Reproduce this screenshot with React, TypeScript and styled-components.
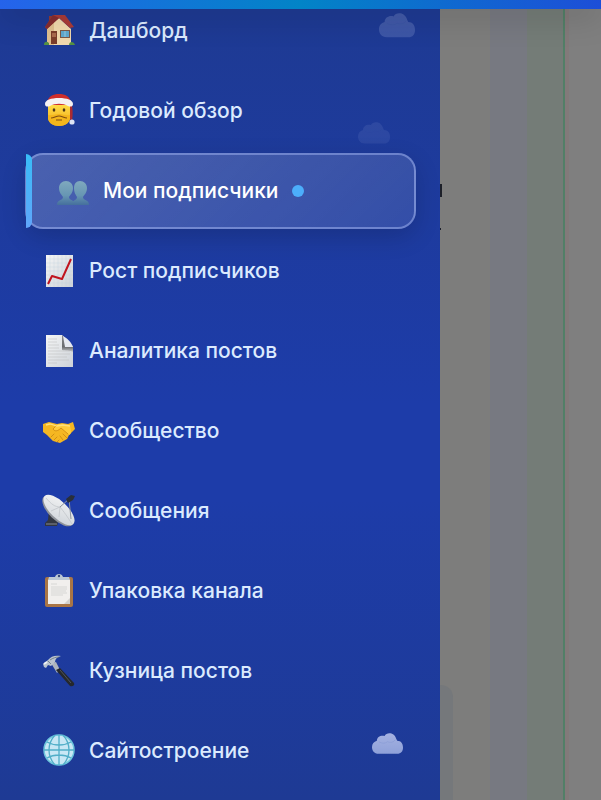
import React, { type ReactNode } from 'react';
import styled, { createGlobalStyle, css } from 'styled-components';

const GlobalStyle = createGlobalStyle`
  * { box-sizing: border-box; }
  html, body { margin: 0; height: 100%; }
  #root { height: 100%; }
  body { font-family: Inter, "Noto Sans", sans-serif; overflow: hidden; background: #7d7d7d; }
`;

const Page = styled.div`
  display: flex;
  flex-direction: column;
  height: 100vh;
`;

const TopBar = styled.header`
  position: relative;
  z-index: 2;
  flex: 0 0 9px;
  background: linear-gradient(90deg, #2563eb 0%, #0284c7 50%, #1d4ed8 100%);
  box-shadow: 0 4px 32px rgba(0, 0, 0, 0.3);
`;

const Body = styled.div`
  display: flex;
  flex: 1;
  min-height: 0;
`;

const Sidebar = styled.aside`
  position: relative;
  flex: 0 0 440px;
  overflow: hidden;
  background: linear-gradient(180deg, #1e3a93 0%, #1d3ca9 50%, #1d3ca9 62%, #1e3a94 100%);
`;

const Menu = styled.ul`
  display: flex;
  flex-direction: column;
  gap: 4px;
  margin: -16px 24px 0 25px;
  padding: 0;
  list-style: none;
`;

const MenuLink = styled.a<{ $active?: boolean }>`
  position: relative;
  display: flex;
  align-items: center;
  gap: 14px;
  height: 76px;
  padding: 0 18px;
  border-radius: 18px;
  color: #dbeafe;
  font-size: 21px;
  font-weight: 500;
  line-height: 32px;
  text-decoration: none;
  white-space: nowrap;
  ${({ $active }) =>
    $active &&
    css`
      padding: 0 30px;
      color: #ffffff;
      border: 2px solid rgba(160, 178, 240, 0.52);
      background: linear-gradient(135deg, rgba(255, 255, 255, 0.2), rgba(255, 255, 255, 0.1));
      box-shadow: 0 8px 24px rgba(0, 0, 0, 0.16);
      &::before {
        content: '';
        position: absolute;
        left: -1px;
        top: -1px;
        bottom: -1px;
        width: 6px;
        border-radius: 0 6px 6px 0;
        background: linear-gradient(180deg, #38bdf8, #60a5fa);
      }
    `}
`;

const IconBox = styled.svg`
  flex: none;
  width: 32px;
  height: 32px;
  overflow: visible;
`;

const Dot = styled.span`
  width: 12px;
  height: 12px;
  border-radius: 50%;
  background: #4caefb;
`;

const CloudSvg = styled.svg<{ $x: number; $y: number; $w: number; $o: number }>`
  position: absolute;
  left: ${({ $x }) => $x}px;
  top: ${({ $y }) => $y}px;
  width: ${({ $w }) => $w}px;
  opacity: ${({ $o }) => $o};
  pointer-events: none;
`;

const Backdrop = styled.main`
  position: relative;
  display: flex;
  flex: 1;
  min-width: 0;
  overflow: hidden;
`;

const Stripe = styled.div<{ $width?: number; $color: string }>`
  flex: ${({ $width }) => ($width ? `0 0 ${$width}px` : '1')};
  background: ${({ $color }) => $color};
`;

const Peek = styled.span<{ $top: number; $w: number; $h: number }>`
  position: absolute;
  left: 0;
  top: ${({ $top }) => $top}px;
  width: ${({ $w }) => $w}px;
  height: ${({ $h }) => $h}px;
  background: #1d2029;
`;

const CardEdge = styled.div`
  position: absolute;
  left: 0;
  top: 676px;
  bottom: 0;
  width: 13px;
  border-top-right-radius: 12px;
  background: #75787b;
`;

const House = () => (
  <>
    <path d="M4 12 16 3l12 11v16H4z" fill="#f1d9ae" />
    <path d="M4 13 11 5v25H4z" fill="#e0bf90" />
    <path d="M6 1h4v8H6z" fill="#8e3a35" />
    <path d="M10 0h12l9 12-4 1L16 3 4 14 2 12z" fill="#a93b38" />
    <path d="M10 0 2 12l2 2L16 3z" fill="#842d30" />
    <rect x="8" y="16" width="6" height="13" fill="#7b3d2b" />
    <rect x="9" y="18" width="4" height="4" fill="#a9694d" />
    <rect x="17" y="15" width="10" height="8" fill="#7d5a46" />
    <rect x="18" y="16" width="8" height="6" fill="#5fa9cf" />
    <path d="M22 16v6" stroke="#9fd4ea" strokeWidth=".8" />
    <path d="M1 30c0-4 3-4 5-2v2zM26 30c0-4 5-4 6 0z" fill="#559143" />
  </>
);

const Santa = () => (
  <>
    <path d="M5 8h22v14c0 5-4 9-11 9S5 27 5 22z" fill="url(#gold)" />
    <path d="M5 20c4 1 7-1 11-1s7 2 11 1v4c-1 4-5 7-11 7S6 28 5 24z" fill="#f3b51c" />
    <path d="M4 7C6 1 10-1 16-1s11 2 12 9v2H5z" fill="#cf2e2a" />
    <path d="M28 7c2 6 2 12 1 19l-2-2V9z" fill="#aa2b31" />
    <path d="M2 9c0-4 6-6 14-6s14 2 14 6c0 3-3 3-5 2-5-3-13-3-18 0-2 1-5 1-5-2z" fill="#f4f1f2" />
    <ellipse cx="11" cy="15" rx="1.300" ry="1.700" fill="#4d3417" />
    <ellipse cx="21" cy="15" rx="1.300" ry="1.700" fill="#4d3417" />
    <path d="M8 23c3 0 5-2 8-2s5 2 8 2M13 25h6" stroke="#7e4b10" strokeWidth="1.100" fill="none" />
    <circle cx="29" cy="27" r="2.600" fill="#dce3f5" />
  </>
);

const People = () => (
  <g fill="url(#people)">
    <path d="M9 6c-4 0-7 3-7 7 0 5 3 7 4 9 0 4-6 2-6 8h18c0-6-6-4-6-8 1-2 4-4 4-9 0-4-3-7-7-7z" />
    <path d="M23 6c-4 0-6 3-6 7 0 5 2 7 3 9 0 4-5 2-5 8h17c0-6-6-4-6-8 1-2 4-4 4-9 0-4-3-7-7-7z" />
  </g>
);

const Growth = () => (
  <>
    <rect x="3" y="0" width="27" height="32" fill="url(#paper)" />
    <path d="M7 0v32M11 0v32M15 0v32M19 0v32M23 0v32M27 0v32M3 4h27M3 8h27M3 12h27M3 16h27M3 20h27M3 24h27M3 28h27" stroke="#b8cbd8" strokeWidth=".3" />
    <path d="m5 29 4-8 10 3 9-20" stroke="#c0141e" strokeWidth="2" fill="none" strokeLinejoin="round" />
  </>
);

const Document = () => (
  <>
    <path d="M3 0h16l11 12v20H3z" fill="url(#paper)" />
    <path d="M5 4h9M5 7h9M5 10h11M5 13h11M5 16h22M5 19h22M5 22h19M5 25h21M5 28h9" stroke="#b8b8b8" strokeWidth=".5" />
    <path d="M19 0v15c3 1 8 0 11 2v-5z" fill="url(#fold)" />
    <path d="M20 1c4 2 9 7 10 11h-8z" fill="#e6e9f0" />
  </>
);

const Handshake = () => (
  <>
    <path d="M0 9 6 7l8 2 5-1 6 1 5-2 2 7-6 6-2 4-7 4-7-2-6-6-4-3z" fill="#f5b722" />
    <path d="m14 9-4 5c2 3 5 2 8-1l8 7c3-1 2-5 1-9l-7-2z" fill="#ffcb3b" />
    <path d="m14 10-4 4c2 3 5 2 8-1l7 6M20 19l4 4M17 21l3 4M8 22l3-3M11 25l3-3M14 27l2-2" fill="none" stroke="#c98511" strokeWidth=".8" strokeLinecap="round" />
    <path d="m3 10 4-1 7 2 6-1 7 1" stroke="#ffe079" fill="none" strokeWidth="1.300" />
  </>
);

const Satellite = () => (
  <>
    <path d="m6 15-1 10-3 3v3h12l1-3-3-6z" fill="#323640" />
    <path d="M3 29h11" stroke="#5b5f69" strokeWidth="2" />
    <ellipse cx="15" cy="16" rx="20" ry="9" fill="#8f939a" transform="rotate(44 15 16)" />
    <ellipse cx="16" cy="15" rx="20" ry="8.500" fill="url(#paper)" transform="rotate(44 16 15)" />
    <path d="M3 3c5 6 9 9 14 9 4 5 7 9 12 17M17 12l-9 4M17 12l-1 10" fill="none" stroke="#bdc1c6" strokeWidth=".7" />
    <path d="m17 12 9-8 2 20" fill="none" stroke="#8d949d" strokeWidth="1" />
    <path d="m23 4 5-4 4 1-2 4-5 3z" fill="#292f3a" />
  </>
);

const Clipboard = () => (
  <>
    <rect x="2" y="2" width="28" height="30" rx="2" fill="#a97545" />
    <rect x="5" y="5" width="22" height="24" fill="#f1efed" />
    <path d="M8 9h6M8 12h16M8 14h16M8 16h15M8 18h16M8 20h12" stroke="#bcbcbd" strokeWidth=".5" />
    <path d="M6 2h6c1-4 7-4 8 0h6l1 3H5z" fill="#bcc9d5" />
    <circle cx="16" cy="1" r="1.200" fill="#354979" />
    <path d="m27 23-6 6h6z" fill="#d3d1ce" />
  </>
);

const Hammer = () => (
  <>
    <path d="m8 8 5-1 4 8-3 3z" fill="#aeb5bd" />
    <path d="m13 15 4-2 14 15c1 2-1 4-4 3z" fill="#25282c" />
    <path d="m17 15 11 13" stroke="#50545a" strokeWidth="1" />
    <path d="M0 9 5 5c3-4 7-5 13-4-4 1-6 3-6 6l-4 4-3-1-2 3-2-1z" fill="#b9c3ce" />
    <path d="m5 6 3 3M7 5c3-2 6-3 9-3" stroke="#65727f" strokeWidth=".8" fill="none" />
    <path d="m1 9 3-2" stroke="#f1f4f6" strokeWidth="2" />
  </>
);

const Globe = () => (
  <>
    <circle cx="16" cy="15" r="15" fill="#c8e7f5" stroke="#6cc5dc" strokeWidth="1.500" />
    <g fill="none" stroke="#51aec8" strokeWidth="1.300">
      <path d="M16 0v30M1 15h30M4 7c7 4 17 4 24 0M4 23c7-4 17-4 24 0" />
      <path d="M12 0C4 9 4 21 12 30M20 0c8 9 8 21 0 30" />
    </g>
  </>
);

const Defs = () => (
  <svg width="0" height="0" aria-hidden="true" display="block">
    <defs>
      <linearGradient id="gold" x1="0" y1="0" x2="0" y2="1">
        <stop stopColor="#ffe04a" />
        <stop offset="1" stopColor="#f1a91b" />
      </linearGradient>
      <linearGradient id="people" gradientUnits="userSpaceOnUse" x1="0" y1="6" x2="0" y2="30">
        <stop stopColor="#7fa9be" />
        <stop offset=".6" stopColor="#6796b3" />
        <stop offset="1" stopColor="#456f9c" />
      </linearGradient>
      <linearGradient id="paper" x1="0" y1="0" x2="1" y2="1">
        <stop stopColor="#f4f5f5" />
        <stop offset="1" stopColor="#cdd2d8" />
      </linearGradient>
      <linearGradient id="fold" x1="0" y1="0" x2="0" y2="1">
        <stop stopColor="#898b8d" />
        <stop offset=".7" stopColor="#686a6d" />
        <stop offset="1" stopColor="#cacbcd" />
      </linearGradient>
      <linearGradient id="cloud" x1="0" y1="0" x2="0" y2="1">
        <stop stopColor="#d2dafa" />
        <stop offset="1" stopColor="#b4c3ef" />
      </linearGradient>
    </defs>
  </svg>
);

const Cloud = (props: { $x: number; $y: number; $w: number; $o: number }) => (
  <CloudSvg viewBox="0 0 32 22" aria-hidden="true" {...props}>
    <path d="M7 21.500C2 21.500 0 18 0 14.500S2 9 5 8c0-4 4-6 8-5 2-4 10-4 12 3l1 2c4 0 6 3 6 7s-2 6.500-6 6.500z" fill="url(#cloud)" />
    <path d="M7 9c3 2 7 2 9 0 3 1 6 1 8-2" fill="none" stroke="#8fa2dc" strokeWidth=".8" opacity=".4" />
  </CloudSvg>
);

const items: { label: string; icon: ReactNode; active?: boolean }[] = [
  { label: 'Дашборд', icon: <House /> },
  { label: 'Годовой обзор', icon: <Santa /> },
  { label: 'Мои подписчики', icon: <People />, active: true },
  { label: 'Рост подписчиков', icon: <Growth /> },
  { label: 'Аналитика постов', icon: <Document /> },
  { label: 'Сообщество', icon: <Handshake /> },
  { label: 'Сообщения', icon: <Satellite /> },
  { label: 'Упаковка канала', icon: <Clipboard /> },
  { label: 'Кузница постов', icon: <Hammer /> },
  { label: 'Сайтостроение', icon: <Globe /> },
];

export default function App() {
  return (
    <Page>
      <GlobalStyle />
      <TopBar />
      <Body>
        <Sidebar>
          <Defs />
          <Cloud $x={379} $y={4} $w={36} $o={0.2} />
          <Cloud $x={358} $y={113} $w={32} $o={0.09} />
          <Cloud $x={372} $y={724} $w={31} $o={0.75} />
          <nav>
            <Menu>
              {items.map(({ label, icon, active }) => (
                <li key={label}>
                  <MenuLink href="#" $active={active} aria-current={active ? 'page' : undefined}>
                    <IconBox viewBox="0 0 32 32" aria-hidden="true">{icon}</IconBox>
                    <span>{label}</span>
                    {active && <Dot />}
                  </MenuLink>
                </li>
              ))}
            </Menu>
          </nav>
        </Sidebar>
        <Backdrop>
          <Stripe $width={50} $color="#7d7d7c" />
          <Stripe $width={37} $color="#777981" />
          <Stripe $width={36} $color="#747c77" />
          <Stripe $width={2} $color="#527f67" />
          <Stripe $width={4} $color="#827a7a" />
          <Stripe $color="#7f7f7f" />
          <Peek $top={175} $w={2} $h={13} />
          <Peek $top={219} $w={1} $h={2} />
          <CardEdge />
        </Backdrop>
      </Body>
    </Page>
  );
}
